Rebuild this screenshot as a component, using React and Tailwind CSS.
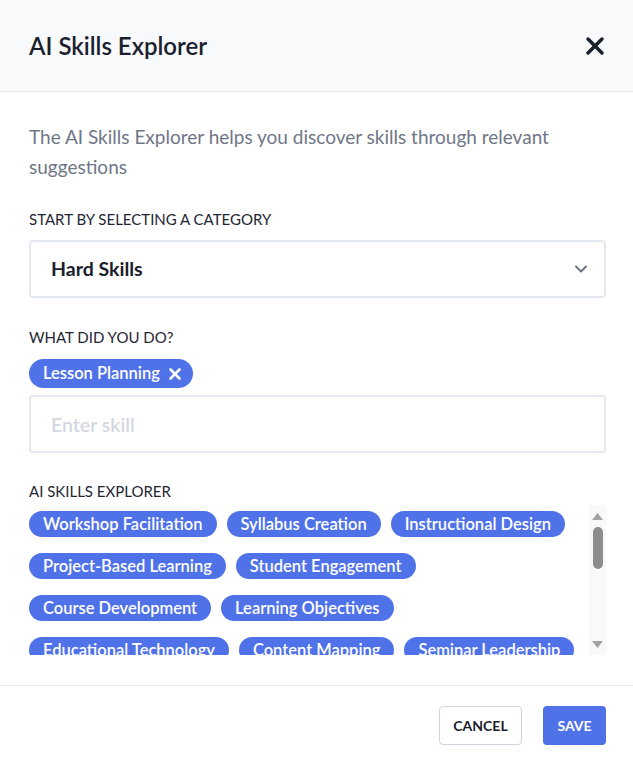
import React, { useState } from 'react';
import { X, ChevronDown } from 'lucide-react';

const SUGGESTIONS = [
  'Workshop Facilitation',
  'Syllabus Creation',
  'Instructional Design',
  'Project-Based Learning',
  'Student Engagement',
  'Course Development',
  'Learning Objectives',
  'Educational Technology',
  'Content Mapping',
  'Seminar Leadership',
  'Classroom Management',
  'Assessment Design',
  'Curriculum Mapping',
  'Peer Mentoring',
  'Differentiated Instruction',
  'Lecture Delivery',
  'Academic Advising',
  'Formative Assessment',
  'Blended Learning',
  'Team Teaching',
  'Rubric Development',
  'Student Feedback',
  'Online Course Design',
  'Grading',
];

const font = { fontFamily: 'Lato, "Noto Sans", sans-serif' };

function Label({ children, className = '' }) {
  return (
    <div className={`text-[15px] leading-5 text-[#1f2633] uppercase ${className}`}>{children}</div>
  );
}

// drawn scrollbar (headless browser hides the native one)
function ScrollBar() {
  return (
    <div className="w-[17px] shrink-0 bg-[#f9f9f9] flex flex-col items-center">
      <svg width="11" height="7" viewBox="0 0 11 7" className="mt-[8px]">
        <path d="M5.5 0 L11 7 L0 7 Z" fill="#a3a3a3" />
      </svg>
      <div className="mt-[7px] w-[10px] h-[42px] rounded-full bg-[#8d8d8d]" />
      <div className="flex-1" />
      <svg width="11" height="7" viewBox="0 0 11 7" className="mb-[7px]">
        <path d="M0 0 L11 0 L5.5 7 Z" fill="#a3a3a3" />
      </svg>
    </div>
  );
}

export default function App() {
  const [selected, setSelected] = useState(['Lesson Planning']);

  return (
    <div className="w-[633px] h-[763px] bg-white flex flex-col overflow-hidden" style={font}>
      {/* Header */}
      <div className="h-[92px] shrink-0 flex items-center justify-between pl-[29px] pr-[24px] bg-[#f8f9fb] border-b border-[#e3e8ef]">
        <h2 className="text-[24px] font-semibold text-[#1a202c]">AI Skills Explorer</h2>
        <button className="text-[#1a202c]">
          <X className="w-[28px] h-[28px]" strokeWidth={3} />
        </button>
      </div>

      {/* Body */}
      <div className="flex-1 pl-[29px] pr-[27px] pt-[30px]">
        <p className="text-[19px] leading-[30px] text-[#6f7787]">
          The AI Skills Explorer helps you discover skills through relevant suggestions
        </p>

        <Label className="mt-[27px]">Start by selecting a category</Label>
        <div className="mt-[11px] h-[58px] rounded border-2 border-[#e4e9f2] flex items-center justify-between pl-5 pr-[13px]">
          <span className="text-[19.5px] font-bold text-[#1a202c]">Hard Skills</span>
          <ChevronDown className="w-[20px] h-[20px] text-[#6b7280]" strokeWidth={2.25} />
        </div>

        <Label className="mt-[29px]">What did you do?</Label>
        <div className="mt-[12px] flex flex-wrap gap-2">
          {selected.map((s) => (
            <span
              key={s}
              className="h-[29px] inline-flex items-center gap-[6px] pl-[14px] pr-[9px] rounded-full bg-[#5072e9] text-white text-[16.5px] font-semibold"
            >
              {s}
              <X className="w-[18px] h-[18px]" strokeWidth={3.5} />
            </span>
          ))}
        </div>
        <input
          className="mt-[7px] w-full h-[58px] rounded border-2 border-[#e4e9f2] px-5 text-[19.5px] font-semibold text-[#1a202c] placeholder:text-[#d3d7de] outline-none"
          style={font}
          placeholder="Enter skill"
        />

        <Label className="mt-[28px]">AI Skills Explorer</Label>
        <div className="mt-[4px] h-[150px] flex">
          <div className="flex-1 overflow-hidden">
            <div className="flex flex-wrap gap-x-[10px] gap-y-[16px] pt-[6px] pr-[4px]">
              {SUGGESTIONS.map((s) => (
                <button
                  key={s}
                  onClick={() => setSelected((p) => (p.includes(s) ? p : [...p, s]))}
                  className="h-[26px] inline-flex items-center px-[14px] rounded-full bg-[#5072e9] text-white text-[16.5px] font-semibold whitespace-nowrap"
                >
                  {s}
                </button>
              ))}
            </div>
          </div>
          <ScrollBar />
        </div>
      </div>

      {/* Footer */}
      <div className="h-[78px] shrink-0 border-t border-[#e3e8ef] flex items-start justify-end gap-[21px] pt-[20px] pr-[27px]">
        <button className="h-[39px] w-[83px] rounded border border-[#cdd5e0] bg-white text-[14px] font-bold text-[#1a202c] uppercase">
          Cancel
        </button>
        <button className="h-[39px] w-[63px] rounded bg-[#5072e9] text-[14px] font-bold text-white uppercase">
          Save
        </button>
      </div>
    </div>
  );
}
